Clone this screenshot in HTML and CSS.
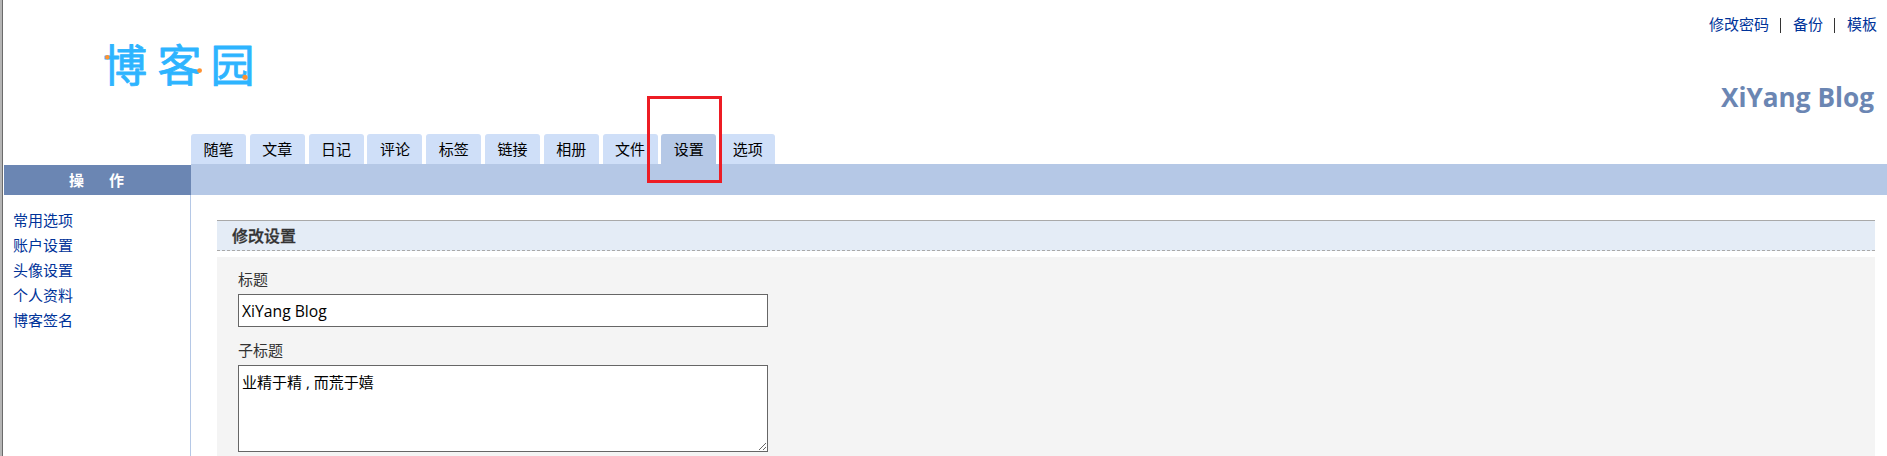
FILE: index.html
```html
<!DOCTYPE html>
<html lang="zh-CN">
<head>
<meta charset="utf-8">
<title>XiYang Blog</title>
<link rel="stylesheet" href="styles.css">
</head>
<body>
<div class="page">
  <header class="header">
    <svg class="logo" viewBox="0 0 180 70" role="img" aria-label="博客园">
      <text class="logo-text" y="51.5" x="13 67.5 120.5">博客园</text>
      <circle class="logo-dot" cx="17.3" cy="27.3" r="2.2"/>
      <circle class="logo-dot" cx="109.6" cy="40.6" r="2.4"/>
      <circle class="logo-dot" cx="155" cy="47.3" r="2.6"/>
    </svg>
    <div class="header-right">
      <nav class="top-links"><a>修改密码</a><i></i><a>备份</a><i></i><a>模板</a></nav>
      <h1 class="blog-title">XiYang Blog</h1>
    </div>
  </header>
  <nav class="tabs">
    <a class="tab">随笔</a>
    <a class="tab">文章</a>
    <a class="tab">日记</a>
    <a class="tab">评论</a>
    <a class="tab">标签</a>
    <a class="tab">链接</a>
    <a class="tab">相册</a>
    <a class="tab">文件</a>
    <a class="tab active">设置</a>
    <a class="tab">选项</a>
  </nav>
  <div class="bar"><div class="bar-title"><span>操</span><span>作</span></div></div>
  <div class="body">
    <aside class="sidebar">
      <a>常用选项</a>
      <a>账户设置</a>
      <a>头像设置</a>
      <a>个人资料</a>
      <a>博客签名</a>
    </aside>
    <main class="main">
      <h2 class="panel-title">修改设置</h2>
      <form class="panel">
        <label class="label" for="title">标题</label>
        <input class="field" id="title" type="text" value="XiYang Blog">
        <label class="label" for="subtitle">子标题</label>
        <textarea class="field area" id="subtitle" spellcheck="false">业精于精 , 而荒于嬉</textarea>
      </form>
    </main>
  </div>
  <div class="highlight"></div>
</div>
</body>
</html>
```
FILE: styles.css
```css
* {
  box-sizing: border-box;
}

body {
  margin: 0;
  border-left: 2px solid #b5b5b5;
  background: #fff;
  font: 15px/25px "Open Sans", "Noto Sans CJK SC", sans-serif;
  color: #333;
}

.page {
  position: relative;
  display: flex;
  flex-direction: column;
  height: 456px;
  overflow: hidden;
  border-left: 1px solid #6b6b6b;
}

.header {
  display: flex;
  justify-content: space-between;
  height: 134px;
  padding-left: 87px;
}

.logo {
  width: 180px;
  height: 70px;
  margin-top: 30px;
}

.logo-text {
  font: 44px "Noto Sans CJK SC", sans-serif;
  fill: #2db4ff;
  stroke: #2db4ff;
  stroke-width: 0.8px;
  stroke-linejoin: round;
}

.logo-dot {
  fill: #ff9130;
}

.header-right {
  display: flex;
  flex-direction: column;
  align-items: flex-end;
}

.top-links {
  display: flex;
  align-items: center;
  padding: 12px 10px 0 0;
  color: #039;
}

.top-links i {
  width: 1px;
  height: 15px;
  margin: 2px 12px 0 11px;
  background: #333;
}

.blog-title {
  margin: 41px 13px 0 0;
  font: bold 26.2px/38px "Open Sans", sans-serif;
  color: #6b86b3;
}

.tabs {
  display: flex;
  gap: 3.8px;
  height: 30px;
  padding-left: 188px;
  color: #000;
}

.tab {
  width: 55px;
  line-height: 31px;
  text-align: center;
  background: #cfdff8;
  border-radius: 3px 3px 0 0;
}

.tab.active {
  background: #b5c8e6;
}

.bar {
  height: 31px;
  padding: 1px 0 0 1px;
  background: linear-gradient(to right, #fff 188px, #b5c8e6 188px);
}

.bar-title {
  display: flex;
  gap: 25px;
  width: 187px;
  height: 30px;
  padding-left: 65px;
  background: #6b86b3;
  color: #fff;
  font-weight: bold;
  line-height: 30px;
}

.body {
  display: flex;
  flex: 1;
}

.sidebar {
  display: flex;
  flex-direction: column;
  width: 188px;
  padding: 13px 0 0 10px;
  border-right: 1px solid #b5c8e6;
  color: #039;
}

.main {
  flex: 1;
  padding: 25px 12px 0 26px;
}

.panel-title {
  height: 31px;
  margin: 0 0 6px;
  padding-left: 15px;
  border-top: 1px solid #a9a9a9;
  border-bottom: 1px dashed #a9a9a9;
  background: #e4ecf6;
  font-size: 16px;
  font-weight: 500;
  line-height: 31px;
  -webkit-text-stroke: 0.3px #333;
}

.panel {
  display: flex;
  flex-direction: column;
  align-items: flex-start;
  height: 199px;
  padding: 10px 21px 0;
  background: #f4f4f4;
}

.label {
  flex: none;
  height: 27px;
}

.field {
  flex: none;
  width: 530px;
  height: 33px;
  margin: 0 0 11px;
  padding: 2px 3px;
  border: 1px solid #666;
  border-radius: 0;
  background: #fff;
  color: #000;
  font: 15.7px/25px "Open Sans", "Noto Sans CJK SC", sans-serif;
}

.area {
  height: 87px;
  padding-top: 4px;
  font-size: 15px;
  resize: vertical;
}

.highlight {
  position: absolute;
  left: 644px;
  top: 96px;
  width: 75px;
  height: 87px;
  border: 3px solid #ed1c24;
}
```
